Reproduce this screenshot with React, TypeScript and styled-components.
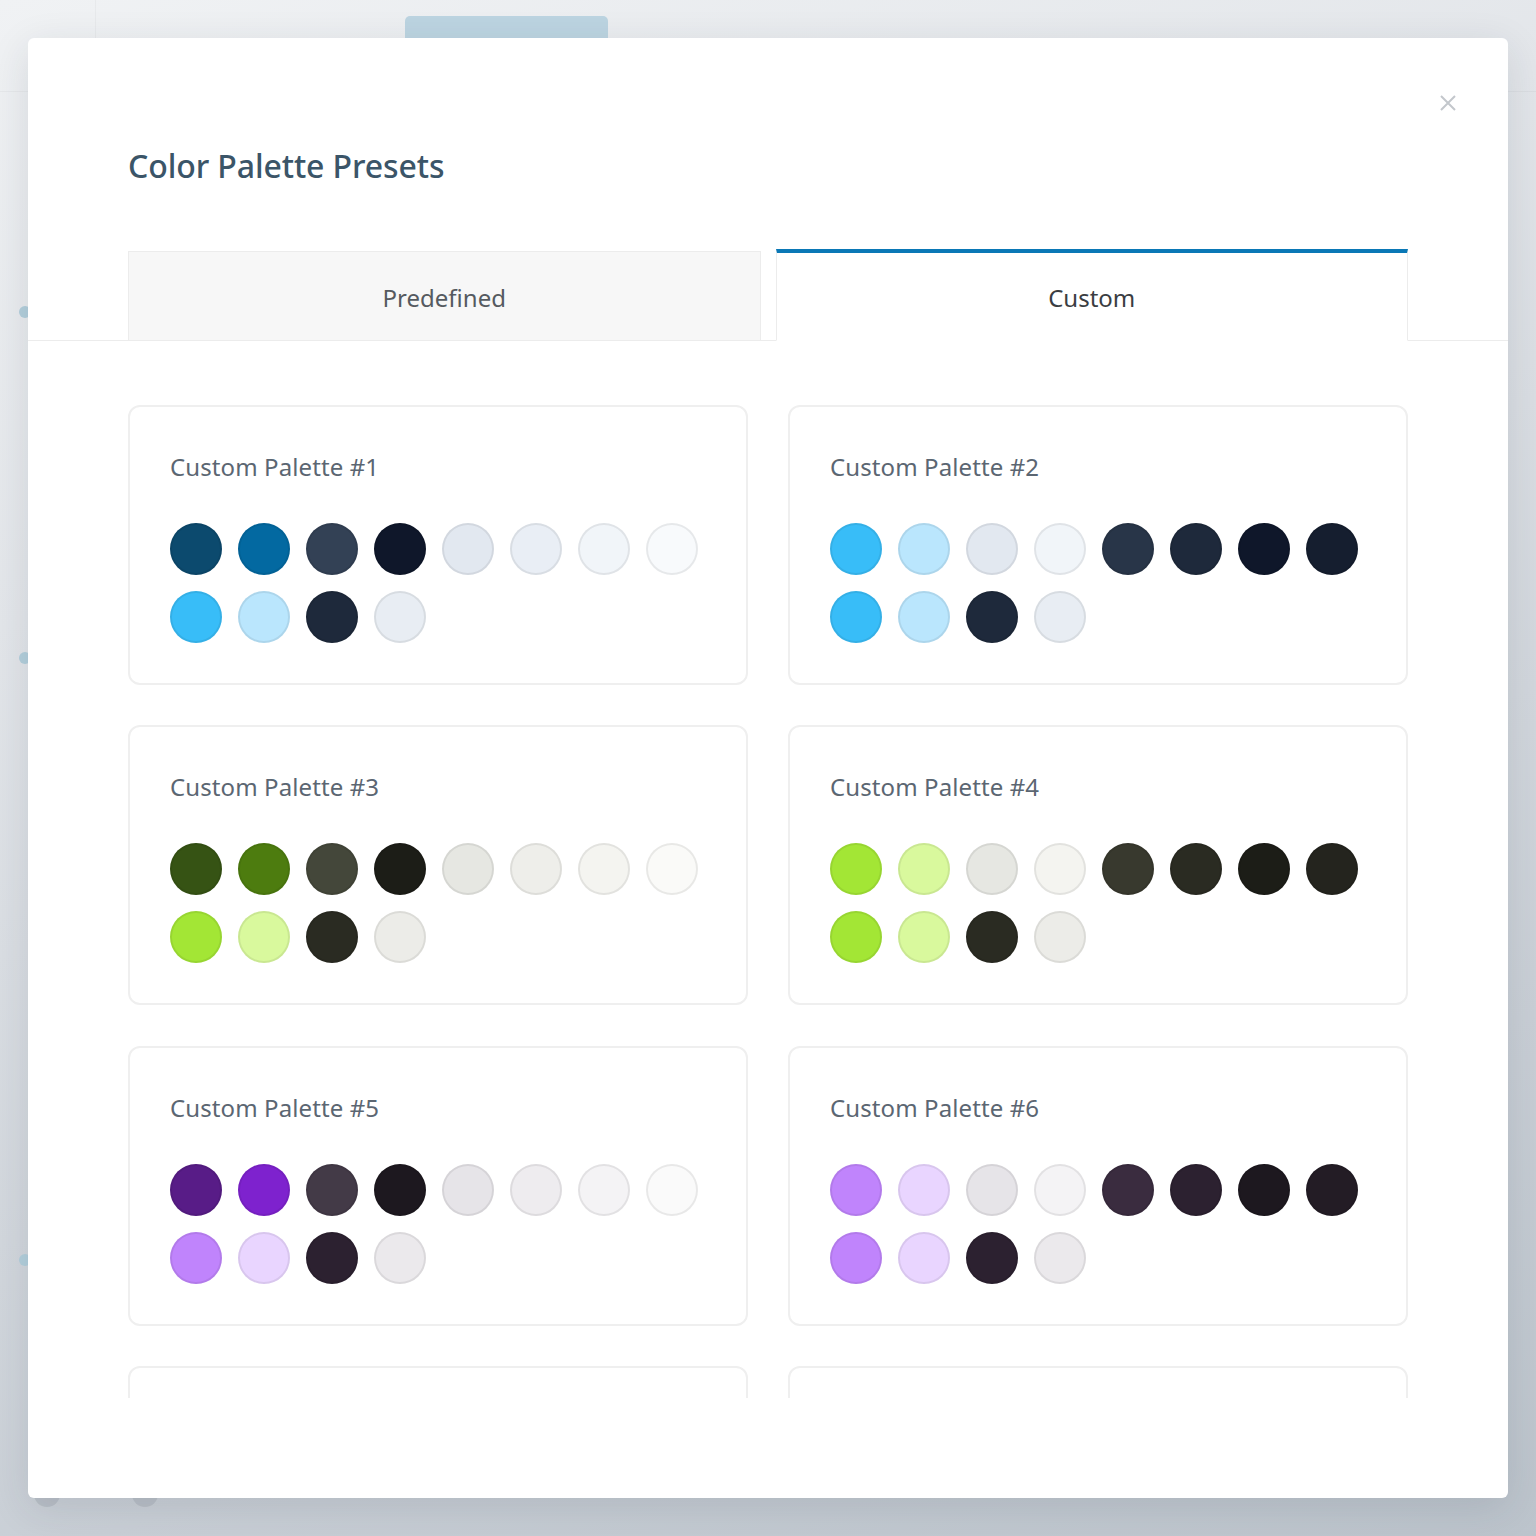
import styled, { createGlobalStyle } from "styled-components";

const GlobalStyle = createGlobalStyle`
	* { box-sizing: border-box; }
	html, body {
		margin: 0;
		padding: 0;
		font-family: "Noto Sans", "Open Sans", sans-serif;
	}
`;

type Palette = { name: string; colors: string[] };

const palettes: Palette[] = [
	{
		name: "Custom Palette #1",
		colors: ["#0c4a6e", "#0369a1", "#334155", "#0f172a", "#e2e8f0", "#e9eef5", "#f1f5f9", "#f8fafc", "#38bdf8", "#bae6fd", "#1e293b", "#e8edf3"]
	},
	{
		name: "Custom Palette #2",
		colors: ["#38bdf8", "#bae6fd", "#e2e8f0", "#f1f5f9", "#283548", "#1e293b", "#0f172a", "#151e2f", "#38bdf8", "#bae6fd", "#1e293b", "#e8edf3"]
	},
	{
		name: "Custom Palette #3",
		colors: ["#365314", "#4d7c0f", "#44473a", "#1c1d17", "#e6e7e2", "#eeeeea", "#f4f4f0", "#fafaf8", "#a3e635", "#d9f99d", "#2a2b22", "#ecece8"]
	},
	{
		name: "Custom Palette #4",
		colors: ["#a3e635", "#d9f99d", "#e6e7e2", "#f4f4f0", "#38392e", "#2a2b22", "#1c1d17", "#24241e", "#a3e635", "#d9f99d", "#2a2b22", "#ecece8"]
	},
	{
		name: "Custom Palette #5",
		colors: ["#581c87", "#7e22ce", "#433a47", "#1d181f", "#e6e4e8", "#eeecef", "#f4f3f5", "#fafafa", "#c084fc", "#e9d5ff", "#2c2130", "#ebe9ec"]
	},
	{
		name: "Custom Palette #6",
		colors: ["#c084fc", "#e9d5ff", "#e6e4e8", "#f4f3f5", "#3a2c3f", "#2c2130", "#1d181f", "#231c25", "#c084fc", "#e9d5ff", "#2c2130", "#ebe9ec"]
	}
];

/* blurred app behind the dialog */
const Page = styled.div`
	width: 1536px;
	height: 1536px;
	overflow: hidden;
	position: relative;
	background: linear-gradient(160deg, #f0f2f4 0%, #e3e6ea 30%, #c9cfd6 75%, #bcc4cc 100%);
	display: flex;
	flex-direction: column;
`;

const PageTop = styled.header`
	height: 92px;
	flex-shrink: 0;
	display: flex;
	border-bottom: 1px solid rgba(0, 0, 0, 0.03);
	filter: blur(0.6px);
`;

const PageLogoCell = styled.div`
	width: 96px;
	border-right: 1px solid rgba(0, 0, 0, 0.03);
`;

const PageButton = styled.div`
	margin: 16px 0 0 309px;
	width: 203px;
	height: 44px;
	border-radius: 5px;
	background: #bcd4e1;
`;

const PageBody = styled.div`
	flex: 1;
	display: flex;
	flex-direction: column;
`;

const PageSidebar = styled.aside`
	flex: 1;
	width: 96px;
	border-right: 1px solid rgba(0, 0, 0, 0.03);
	display: flex;
	flex-direction: column;
	align-items: flex-start;
`;

const PageDot = styled.span<{ offset: number }>`
	width: 12px;
	height: 12px;
	margin: ${p => p.offset}px 0 0 19px;
	border-radius: 50%;
	background: #b3cfdc;
`;

const PageFooter = styled.footer`
	height: 55px;
	display: flex;
	align-items: flex-start;
	gap: 72px;
	padding-left: 34px;
`;

const PageAvatar = styled.span`
	width: 26px;
	height: 26px;
	border-radius: 50%;
	background: #b9bfc7;
`;

const Overlay = styled.div`
	position: absolute;
	inset: 0;
	padding: 38px 28px;
`;

const Modal = styled.div`
	position: relative;
	height: 1460px;
	background: #fff;
	border-radius: 6px;
	box-shadow: 0 10px 40px rgba(30, 40, 55, 0.12);
	display: flex;
	flex-direction: column;
	overflow: hidden;
`;

const CloseButton = styled.button`
	position: absolute;
	top: 54px;
	right: 49px;
	width: 22px;
	height: 22px;
	padding: 0;
	border: 0;
	background: none;
	display: flex;
	align-items: center;
	justify-content: center;
	cursor: pointer;
`;

const Title = styled.h2`
	margin: 0;
	padding: 106px 100px 0;
	font-size: 32px;
	line-height: 44px;
	font-weight: 500;
	color: #3b5568;
	letter-spacing: -0.1px;
`;

const TabBar = styled.div`
	margin-top: 61px;
	padding: 0 100px;
	display: flex;
	align-items: flex-end;
	gap: 15px;
	border-bottom: 1px solid #ececec;
`;

const Tab = styled.button<{ active?: boolean }>`
	flex: 1;
	height: ${p => (p.active ? "92px" : "90px")};
	margin-bottom: -1px;
	font-family: inherit;
	font-size: 24px;
	color: ${p => (p.active ? "#3a3d42" : "#555a60")};
	background: ${p => (p.active ? "#fff" : "#f7f7f7")};
	border: 1px solid #ececec;
	border-top: ${p => (p.active ? "4px solid #0a78b6" : "1px solid #ececec")};
	border-bottom: ${p => (p.active ? "1px solid #fff" : "1px solid #ececec")};
	padding: 0;
	padding-top: ${p => (p.active ? "1px" : "3px")};
	cursor: pointer;
`;

const Body = styled.div`
	height: 1057px;
	overflow: hidden;
	padding: 64px 100px 0;
`;

const Grid = styled.div`
	display: grid;
	grid-template-columns: repeat(2, 620px);
	column-gap: 40px;
	row-gap: 40.4px;
`;

const Card = styled.div`
	height: 280px;
	border: 2px solid #efefef;
	border-radius: 12px;
	padding: 43px 40px 40px;
`;

const CardTitle = styled.div`
	font-size: 24px;
	line-height: 34px;
	letter-spacing: 0.1px;
	color: #5b6672;
	margin-bottom: 39px;
`;

const Swatches = styled.div`
	display: flex;
	flex-wrap: wrap;
	gap: 16px;
`;

const Swatch = styled.span`
	width: 52px;
	height: 52px;
	border-radius: 50%;
	box-shadow: inset 0 0 0 2px rgba(0, 0, 0, 0.07);
`;

function PaletteCard({ palette }: { palette: Palette }) {
	return (
		<Card>
			<CardTitle>{palette.name}</CardTitle>
			<Swatches>
				{palette.colors.map((color, i) => (
					<Swatch key={i} style={{ background: color }} title={color} />
				))}
			</Swatches>
		</Card>
	);
}

export default function App() {
	return (
		<>
			<GlobalStyle />
			<Page>
				<PageTop>
					<PageLogoCell />
					<PageButton />
				</PageTop>
				<PageBody>
					<PageSidebar>
						<PageDot offset={214} />
						<PageDot offset={334} />
						<PageDot offset={590} />
					</PageSidebar>
					<PageFooter>
						<PageAvatar />
						<PageAvatar />
					</PageFooter>
				</PageBody>
				<Overlay>
					<Modal>
						<CloseButton aria-label="Close">
							<svg width="18" height="18" viewBox="0 0 18 18">
								<path d="M2 2 L16 16 M16 2 L2 16" stroke="#c3c7cc" strokeWidth="2" />
							</svg>
						</CloseButton>
						<Title>Color Palette Presets</Title>
						<TabBar>
							<Tab>Predefined</Tab>
							<Tab active>Custom</Tab>
						</TabBar>
						<Body>
							<Grid>
								{palettes.map(p => (
									<PaletteCard key={p.name} palette={p} />
								))}
								{/* next row of saved palettes, scrolled below the fold */}
								<Card />
								<Card />
							</Grid>
						</Body>
					</Modal>
				</Overlay>
			</Page>
		</>
	);
}
